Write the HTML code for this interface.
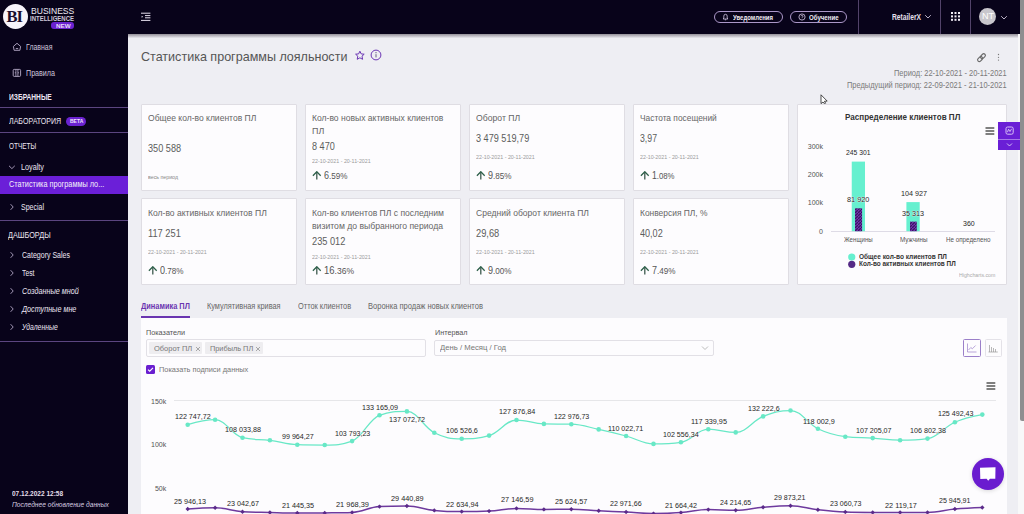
<!DOCTYPE html><html><head><meta charset="utf-8"><style>
html,body{margin:0;padding:0;width:1024px;height:514px;overflow:hidden;background:#eeeef3}
body{position:relative;font-family:"Liberation Sans",sans-serif}
.t{position:absolute;white-space:nowrap;line-height:1;transform-origin:0 0}
</style></head><body>
<!-- sidebar -->
<div style="position:absolute;left:0;top:0;width:128px;height:514px;background:#08031a"></div>
<div style="position:absolute;left:128px;top:0;width:892px;height:34px;background:#08031a"></div>
<!-- header shadow -->
<div style="position:absolute;left:128px;top:34px;width:892px;height:4px;background:linear-gradient(#938f98,#e9e8ee)"></div>
<!-- main bg -->
<div style="position:absolute;left:128px;top:38px;width:892px;height:476px;background:#eeeef3"></div>
<!-- scrollbar -->
<div style="position:absolute;left:1018.2px;top:34px;width:6px;height:480px;background:#f8f8f9"></div>
<div style="position:absolute;left:1019.8px;top:-4px;width:4.2px;height:424.5px;background:#8e8e90;border-radius:2.1px 0 0 2.1px"></div>

<!-- logo -->
<div style="position:absolute;left:2.7px;top:4.3px;width:25px;height:25px;border-radius:50%;background:#f7f4fa"></div>
<div style="position:absolute;left:6.4px;top:8.5px;font:bold 16.5px 'Liberation Serif',serif;color:#1a0f2e;line-height:1;letter-spacing:-1px">BI</div>
<div style="position:absolute;left:51px;top:22.3px;width:23px;height:6.3px;border-radius:3px;background:#6a22d0"></div>
<div style="position:absolute;left:56px;top:22.6px;font:bold 6px 'Liberation Sans',sans-serif;color:#e9def8;line-height:1;transform:scaleX(1.05);transform-origin:left">NEW</div>

<!-- sidebar icons -->
<svg style="position:absolute;left:12px;top:42px" width="10" height="10" viewBox="0 0 10 10"><path d="M1.4 4.4 L5 1.3 L8.6 4.4 L7.9 8.3 H2.1 Z M3.8 6.6 H6.2" fill="none" stroke="#b9aecb" stroke-width="0.9" stroke-linejoin="round"/></svg>
<svg style="position:absolute;left:12px;top:68px" width="10" height="10" viewBox="0 0 10 10"><rect x="1.2" y="1.4" width="7.4" height="7" rx="1" fill="none" stroke="#b9aecb" stroke-width="0.9"/><path d="M3.9 2 V8 M5.9 2 V8 M3.9 4.8 H2.8 M5.9 4.8 H7" stroke="#b9aecb" stroke-width="0.8"/></svg>
<div style="position:absolute;left:0;top:107.1px;width:128px;height:1px;background:#5b4580"></div>
<div style="position:absolute;left:65.6px;top:116.9px;width:20.4px;height:8.7px;border-radius:4.4px;background:#6a22d0"></div>
<div style="position:absolute;left:70px;top:118.6px;font:bold 5px 'Liberation Sans',sans-serif;color:#efe6fa;line-height:1">BETA</div>
<div style="position:absolute;left:0;top:132.1px;width:128px;height:1px;background:#5b4580"></div>
<svg style="position:absolute;left:8px;top:163px" width="8" height="8" viewBox="0 0 8 8"><path d="M1 2.8 L3.9 5.6 L6.8 2.8" fill="none" stroke="#b3a7c6" stroke-width="0.9"/></svg>
<div style="position:absolute;left:0;top:176px;width:128px;height:18px;background:#6b1fd8"></div>
<svg style="position:absolute;left:8px;top:203px" width="8" height="8" viewBox="0 0 8 8"><path d="M2.6 1.2 L5.2 4 L2.6 6.8" fill="none" stroke="#b3a7c6" stroke-width="0.9"/></svg>
<div style="position:absolute;left:0;top:219.9px;width:128px;height:1px;background:#5b4580"></div>
<svg style="position:absolute;left:8px;top:251px" width="8" height="8" viewBox="0 0 8 8"><path d="M2.6 1.2 L5.2 4 L2.6 6.8" fill="none" stroke="#b3a7c6" stroke-width="0.9"/></svg>
<svg style="position:absolute;left:8px;top:269px" width="8" height="8" viewBox="0 0 8 8"><path d="M2.6 1.2 L5.2 4 L2.6 6.8" fill="none" stroke="#b3a7c6" stroke-width="0.9"/></svg>
<svg style="position:absolute;left:8px;top:287px" width="8" height="8" viewBox="0 0 8 8"><path d="M2.6 1.2 L5.2 4 L2.6 6.8" fill="none" stroke="#b3a7c6" stroke-width="0.9"/></svg>
<svg style="position:absolute;left:8px;top:305px" width="8" height="8" viewBox="0 0 8 8"><path d="M2.6 1.2 L5.2 4 L2.6 6.8" fill="none" stroke="#b3a7c6" stroke-width="0.9"/></svg>
<svg style="position:absolute;left:8px;top:323px" width="8" height="8" viewBox="0 0 8 8"><path d="M2.6 1.2 L5.2 4 L2.6 6.8" fill="none" stroke="#b3a7c6" stroke-width="0.9"/></svg>
<div style="position:absolute;left:0;top:340.5px;width:128px;height:1px;background:#5b4580"></div>

<!-- header items -->
<svg style="position:absolute;left:140px;top:12px" width="12" height="11" viewBox="0 0 12 11"><path d="M1 1.2 H10.4 M5 3.6 H10.4 M5 5.8 H10.4 M1 8.4 H10.4" stroke="#e6e0ee" stroke-width="1"/><path d="M1.6 3.8 L3.2 4.8 L1.6 5.8 Z" fill="#e6e0ee"/></svg>
<div style="position:absolute;left:714px;top:11px;width:66.6px;height:9.8px;border:1px solid #ab97c8;border-radius:6px"></div>
<svg style="position:absolute;left:722px;top:13px" width="7" height="8" viewBox="0 0 7 8"><path d="M1.2 6 H5.8 L5.2 5 V3.2 A1.7 1.9 0 0 0 1.8 3.2 V5 Z M2.8 6.8 H4.2" fill="none" stroke="#d6cae6" stroke-width="0.8"/></svg>
<div style="position:absolute;left:789.7px;top:11px;width:55.5px;height:9.8px;border:1px solid #ab97c8;border-radius:6px"></div>
<svg style="position:absolute;left:797.5px;top:13.2px" width="8" height="8" viewBox="0 0 8 8"><circle cx="4" cy="4" r="3.1" fill="none" stroke="#d6cae6" stroke-width="0.8"/><path d="M3 3.2 A1 1 0 1 1 4 4.3 V4.8 M4 5.8 V6.2" fill="none" stroke="#d6cae6" stroke-width="0.7"/></svg>
<div style="position:absolute;left:858px;top:0;width:1px;height:34px;background:#52436a"></div>
<div style="position:absolute;left:939.6px;top:0;width:1px;height:34px;background:#52436a"></div>
<div style="position:absolute;left:970px;top:0;width:1px;height:34px;background:#52436a"></div>
<svg style="position:absolute;left:923.8px;top:13px" width="8" height="7" viewBox="0 0 8 7"><path d="M1.2 2.2 L4 5 L6.8 2.2" fill="none" stroke="#cfc6da" stroke-width="0.9"/></svg>
<svg style="position:absolute;left:951px;top:12.3px" width="9" height="9" viewBox="0 0 9 9" fill="#f2eef6"><rect x="0" y="0" width="2" height="2"/><rect x="3.5" y="0" width="2" height="2"/><rect x="7" y="0" width="2" height="2"/><rect x="0" y="3.4" width="2" height="2"/><rect x="3.5" y="3.4" width="2" height="2"/><rect x="7" y="3.4" width="2" height="2"/><rect x="0" y="6.8" width="2" height="2"/><rect x="3.5" y="6.8" width="2" height="2"/><rect x="7" y="6.8" width="2" height="2"/></svg>
<div style="position:absolute;left:978.8px;top:7.9px;width:17.6px;height:17.6px;border-radius:50%;background:#c8c6cc"></div>
<svg style="position:absolute;left:1000px;top:13.5px" width="8" height="7" viewBox="0 0 8 7"><path d="M1.2 2.2 L4 5 L6.8 2.2" fill="none" stroke="#cfc6da" stroke-width="0.9"/></svg>

<!-- title icons -->
<svg style="position:absolute;left:354px;top:50px" width="12" height="11" viewBox="0 0 12 11"><path d="M5.9 1.2 L7.2 3.9 L10.2 4.2 L8 6.2 L8.6 9.3 L5.9 7.8 L3.2 9.3 L3.8 6.2 L1.6 4.2 L4.6 3.9 Z" fill="none" stroke="#6b35b4" stroke-width="1" stroke-linejoin="round"/></svg>
<svg style="position:absolute;left:369.7px;top:49.3px" width="12" height="12" viewBox="0 0 12 12"><circle cx="6" cy="6" r="4.9" fill="none" stroke="#6b35b4" stroke-width="1"/><path d="M6 5.2 V8.4" stroke="#5a4a78" stroke-width="0.9"/><circle cx="6" cy="3.7" r="0.6" fill="#5a4a78"/></svg>
<svg style="position:absolute;left:975px;top:51px" width="13" height="13" viewBox="0 0 13 13"><g transform="rotate(-45 6.5 6.5)" fill="none" stroke="#6a6a6a" stroke-width="1.15"><rect x="1.6" y="4.9" width="5.6" height="3.4" rx="1.7"/><rect x="5.6" y="4.9" width="5.6" height="3.4" rx="1.7"/></g></svg>
<svg style="position:absolute;left:997px;top:53px" width="3" height="9" viewBox="0 0 3 9" fill="#777"><circle cx="1.5" cy="1.5" r="0.65"/><circle cx="1.5" cy="4.3" r="0.65"/><circle cx="1.5" cy="7.1" r="0.65"/></svg>
<!-- cursor -->
<svg style="position:absolute;left:820px;top:93.5px" width="9" height="11" viewBox="0 0 9 11"><path d="M1 0.8 V9.6 L3 8 L4.5 9.8 L5.6 9.2 L4.4 7.3 L7.2 7.1 Z" fill="#fff" stroke="#222" stroke-width="0.8" stroke-linejoin="round"/></svg>

<div style="position:absolute;left:141px;top:103.5px;width:154.00px;height:85.00px;background:#fdfcfe;border:1px solid #dfdde3;border-radius:1px;"></div>
<div style="position:absolute;left:141px;top:198.1px;width:154.00px;height:84.90px;background:#fdfcfe;border:1px solid #dfdde3;border-radius:1px;"></div>
<div style="position:absolute;left:305px;top:103.5px;width:154.00px;height:85.00px;background:#fdfcfe;border:1px solid #dfdde3;border-radius:1px;"></div>
<div style="position:absolute;left:305px;top:198.1px;width:154.00px;height:84.90px;background:#fdfcfe;border:1px solid #dfdde3;border-radius:1px;"></div>
<div style="position:absolute;left:469px;top:103.5px;width:154.00px;height:85.00px;background:#fdfcfe;border:1px solid #dfdde3;border-radius:1px;"></div>
<div style="position:absolute;left:469px;top:198.1px;width:154.00px;height:84.90px;background:#fdfcfe;border:1px solid #dfdde3;border-radius:1px;"></div>
<div style="position:absolute;left:633px;top:103.5px;width:154.00px;height:85.00px;background:#fdfcfe;border:1px solid #dfdde3;border-radius:1px;"></div>
<div style="position:absolute;left:633px;top:198.1px;width:154.00px;height:84.90px;background:#fdfcfe;border:1px solid #dfdde3;border-radius:1px;"></div>
<div style="position:absolute;left:797px;top:103.5px;width:208.00px;height:179.00px;background:#fdfcfe;border:1px solid #dfdde3;border-radius:1px;"></div>
<svg style="position:absolute;left:312.1px;top:170.8px" width="10" height="9" viewBox="0 0 10 9"><path d="M4.8 8.6 V1.2" fill="none" stroke="#3d5a4e" stroke-width="1.3"/><path d="M0.9 4.7 L4.8 0.7 L8.7 4.7" fill="none" stroke="#2c5e48" stroke-width="1.25"/></svg>
<svg style="position:absolute;left:476.1px;top:170.8px" width="10" height="9" viewBox="0 0 10 9"><path d="M4.8 8.6 V1.2" fill="none" stroke="#3d5a4e" stroke-width="1.3"/><path d="M0.9 4.7 L4.8 0.7 L8.7 4.7" fill="none" stroke="#2c5e48" stroke-width="1.25"/></svg>
<svg style="position:absolute;left:640.1px;top:170.8px" width="10" height="9" viewBox="0 0 10 9"><path d="M4.8 8.6 V1.2" fill="none" stroke="#3d5a4e" stroke-width="1.3"/><path d="M0.9 4.7 L4.8 0.7 L8.7 4.7" fill="none" stroke="#2c5e48" stroke-width="1.25"/></svg>
<svg style="position:absolute;left:148.1px;top:265.8px" width="10" height="9" viewBox="0 0 10 9"><path d="M4.8 8.6 V1.2" fill="none" stroke="#3d5a4e" stroke-width="1.3"/><path d="M0.9 4.7 L4.8 0.7 L8.7 4.7" fill="none" stroke="#2c5e48" stroke-width="1.25"/></svg>
<svg style="position:absolute;left:312.1px;top:265.8px" width="10" height="9" viewBox="0 0 10 9"><path d="M4.8 8.6 V1.2" fill="none" stroke="#3d5a4e" stroke-width="1.3"/><path d="M0.9 4.7 L4.8 0.7 L8.7 4.7" fill="none" stroke="#2c5e48" stroke-width="1.25"/></svg>
<svg style="position:absolute;left:476.1px;top:265.8px" width="10" height="9" viewBox="0 0 10 9"><path d="M4.8 8.6 V1.2" fill="none" stroke="#3d5a4e" stroke-width="1.3"/><path d="M0.9 4.7 L4.8 0.7 L8.7 4.7" fill="none" stroke="#2c5e48" stroke-width="1.25"/></svg>
<svg style="position:absolute;left:640.1px;top:265.8px" width="10" height="9" viewBox="0 0 10 9"><path d="M4.8 8.6 V1.2" fill="none" stroke="#3d5a4e" stroke-width="1.3"/><path d="M0.9 4.7 L4.8 0.7 L8.7 4.7" fill="none" stroke="#2c5e48" stroke-width="1.25"/></svg>
<svg style="position:absolute;left:985px;top:126.5px" width="10" height="8" viewBox="0 0 10 8"><path d="M0.5 1 H9.3 M0.5 4 H9.3 M0.5 7 H9.3" stroke="#555" stroke-width="1.3"/></svg>
<div style="position:absolute;left:831px;top:230.7px;width:164.3px;height:1px;background:#dedbe6"></div>
<svg style="position:absolute;left:0;top:0" width="1024" height="514"><defs><pattern id="pp" width="3" height="3" patternUnits="userSpaceOnUse"><rect width="3" height="3" fill="#7434b0"/><path d="M0 3 L3 0" stroke="#3a1562" stroke-width="1.3"/></pattern></defs><rect x="851.75" y="161.6" width="13.25" height="69.6" fill="#66f0cf"/><rect x="855" y="208.3" width="7.1" height="22.9" fill="url(#pp)"/><rect x="906.4" y="202.1" width="13.3" height="29.1" fill="#66f0cf"/><rect x="910" y="221.6" width="6.8" height="9.6" fill="url(#pp)"/><circle cx="851.75" cy="257" r="3.6" fill="#66f0cf"/><circle cx="851.75" cy="264.3" r="3.6" fill="#552a86"/></svg>
<div style="position:absolute;left:998px;top:122.3px;width:22px;height:27.7px;background:#6a1fd6"></div>
<div style="position:absolute;left:998px;top:139.4px;width:22px;height:0.8px;background:#a679e8"></div>
<svg style="position:absolute;left:1004.5px;top:126.4px" width="9" height="9" viewBox="0 0 9 9"><rect x="1" y="1" width="7.2" height="7.2" rx="1.6" fill="none" stroke="#d9c2f6" stroke-width="1"/><path d="M2.4 6.2 L3.6 3.2 L5 5.6 L6.6 2.8" fill="none" stroke="#d9c2f6" stroke-width="0.9"/></svg>
<svg style="position:absolute;left:1005.5px;top:142px" width="7" height="6" viewBox="0 0 7 6"><path d="M1 1.5 L3.5 4 L6 1.5" fill="none" stroke="#eadffa" stroke-width="0.8"/></svg>
<div style="position:absolute;left:141px;top:316.4px;width:49px;height:1.6px;background:#6a35b0"></div>
<div style="position:absolute;left:141px;top:318px;width:866.00px;height:196.00px;background:#fdfcfe;border-radius:0px;"></div>
<div style="position:absolute;left:146px;top:339px;width:277.50px;height:15.60px;background:#fdfcfe;border:1px solid #e2e0e6;border-radius:2px;"></div>
<div style="position:absolute;left:149px;top:342px;width:53.00px;height:12.00px;background:#eeedf0;border-radius:1px;"></div>
<div style="position:absolute;left:204.5px;top:342px;width:58.30px;height:12.00px;background:#eeedf0;border-radius:1px;"></div>
<svg style="position:absolute;left:194.5px;top:345.5px" width="6" height="6" viewBox="0 0 6 6"><path d="M1 1 L5 5 M5 1 L1 5" stroke="#888" stroke-width="0.7"/></svg>
<svg style="position:absolute;left:254.8px;top:345.5px" width="6" height="6" viewBox="0 0 6 6"><path d="M1 1 L5 5 M5 1 L1 5" stroke="#888" stroke-width="0.7"/></svg>
<div style="position:absolute;left:434.4px;top:339.5px;width:277.80px;height:14.90px;background:#fdfcfe;border:1px solid #e2e0e6;border-radius:2px;"></div>
<svg style="position:absolute;left:700.5px;top:345px" width="8" height="6" viewBox="0 0 8 6"><path d="M1 1.5 L4 4.5 L7 1.5" fill="none" stroke="#aaa" stroke-width="0.8"/></svg>
<div style="position:absolute;left:146px;top:365px;width:8.60px;height:8.70px;background:#6a1fd0;border-radius:1.5px;"></div>
<svg style="position:absolute;left:146px;top:365px" width="9" height="9" viewBox="0 0 9 9"><path d="M2 4.6 L3.7 6.2 L7 2.9" fill="none" stroke="#fff" stroke-width="1.1"/></svg>
<div style="position:absolute;left:962.8px;top:339px;width:15.80px;height:15.70px;background:#fdfcfe;border:1px solid #9b7fc9;border-radius:1.5px;"></div>
<div style="position:absolute;left:984.6px;top:339px;width:15.40px;height:15.70px;background:#fdfcfe;border:1px solid #e4e2e8;border-radius:1.5px;"></div>
<svg style="position:absolute;left:966px;top:342px" width="12" height="12" viewBox="0 0 12 12"><path d="M1.5 1.5 V10 H10.5" fill="none" stroke="#9b7fc9" stroke-width="0.7"/><path d="M2.5 8 L4.8 5.5 L6.3 6.8 L9.6 3.5" fill="none" stroke="#9b7fc9" stroke-width="0.7"/></svg>
<svg style="position:absolute;left:987px;top:342px" width="12" height="12" viewBox="0 0 12 12"><path d="M1.5 10 H10.8 M2.5 10 V3 M4.5 10 V5 M6.5 10 V6 M8.5 10 V7" fill="none" stroke="#999" stroke-width="0.7"/></svg>
<svg style="position:absolute;left:985.5px;top:382px" width="10" height="8" viewBox="0 0 10 8"><path d="M0.5 1 H9.3 M0.5 4 H9.3 M0.5 7 H9.3" stroke="#555" stroke-width="1.3"/></svg>
<div style="position:absolute;left:174.4px;top:400px;width:821.8px;height:1px;background:#e6e6e9"></div>
<svg style="position:absolute;left:0;top:0" width="1024" height="514"><path d="M187.70 424.70 C187.70 424.70 204.14 419.70 215.10 419.70 C226.06 419.70 231.54 435.10 242.50 437.70 C253.46 440.30 258.94 438.90 269.90 440.30 C280.86 441.70 286.34 444.40 297.30 444.70 C308.26 445.00 313.74 445.00 324.70 445.00 C335.66 445.00 341.14 445.00 352.10 441.10 C363.06 437.20 368.54 419.20 379.50 415.30 C390.46 411.40 395.94 411.40 406.90 411.40 C417.86 411.40 423.34 427.23 434.30 432.70 C445.26 438.17 450.74 438.75 461.70 438.75 C472.66 438.75 478.14 438.75 489.10 435.60 C500.06 432.45 505.54 420.00 516.50 420.00 C527.46 420.00 532.94 423.60 543.90 423.90 C554.86 424.20 560.34 423.90 571.30 424.20 C582.26 424.50 587.74 427.04 598.70 429.40 C609.66 431.76 615.14 433.10 626.10 436.00 C637.06 438.90 642.54 443.90 653.50 443.90 C664.46 443.90 669.94 443.90 680.90 442.30 C691.86 440.70 697.34 429.20 708.30 429.20 C719.26 429.20 724.74 432.40 735.70 432.40 C746.66 432.40 752.14 420.78 763.10 416.40 C774.06 412.02 779.54 410.50 790.50 410.50 C801.46 410.50 806.94 423.46 817.90 428.70 C828.86 433.94 834.34 435.30 845.30 436.70 C856.26 438.10 861.74 437.40 872.70 438.10 C883.66 438.80 889.14 440.20 900.10 440.20 C911.06 440.20 916.54 440.20 927.50 438.60 C938.46 437.00 943.94 427.00 954.90 422.20 C965.86 417.40 982.30 414.60 982.30 414.60" fill="none" stroke="#68e8c6" stroke-width="1.25"/><circle cx="187.70" cy="424.7" r="2.3" fill="#68e8c6"/><circle cx="215.10" cy="419.7" r="2.3" fill="#68e8c6"/><circle cx="242.50" cy="437.7" r="2.3" fill="#68e8c6"/><circle cx="269.90" cy="440.3" r="2.3" fill="#68e8c6"/><circle cx="297.30" cy="444.7" r="2.3" fill="#68e8c6"/><circle cx="324.70" cy="445.0" r="2.3" fill="#68e8c6"/><circle cx="352.10" cy="441.1" r="2.3" fill="#68e8c6"/><circle cx="379.50" cy="415.3" r="2.3" fill="#68e8c6"/><circle cx="406.90" cy="411.4" r="2.3" fill="#68e8c6"/><circle cx="434.30" cy="432.7" r="2.3" fill="#68e8c6"/><circle cx="461.70" cy="438.75" r="2.3" fill="#68e8c6"/><circle cx="489.10" cy="435.6" r="2.3" fill="#68e8c6"/><circle cx="516.50" cy="420.0" r="2.3" fill="#68e8c6"/><circle cx="543.90" cy="423.9" r="2.3" fill="#68e8c6"/><circle cx="571.30" cy="424.2" r="2.3" fill="#68e8c6"/><circle cx="598.70" cy="429.4" r="2.3" fill="#68e8c6"/><circle cx="626.10" cy="436.0" r="2.3" fill="#68e8c6"/><circle cx="653.50" cy="443.9" r="2.3" fill="#68e8c6"/><circle cx="680.90" cy="442.3" r="2.3" fill="#68e8c6"/><circle cx="708.30" cy="429.2" r="2.3" fill="#68e8c6"/><circle cx="735.70" cy="432.4" r="2.3" fill="#68e8c6"/><circle cx="763.10" cy="416.4" r="2.3" fill="#68e8c6"/><circle cx="790.50" cy="410.5" r="2.3" fill="#68e8c6"/><circle cx="817.90" cy="428.7" r="2.3" fill="#68e8c6"/><circle cx="845.30" cy="436.7" r="2.3" fill="#68e8c6"/><circle cx="872.70" cy="438.1" r="2.3" fill="#68e8c6"/><circle cx="900.10" cy="440.2" r="2.3" fill="#68e8c6"/><circle cx="927.50" cy="438.6" r="2.3" fill="#68e8c6"/><circle cx="954.90" cy="422.2" r="2.3" fill="#68e8c6"/><circle cx="982.30" cy="414.6" r="2.3" fill="#68e8c6"/><path d="M187.70 509.00 C187.70 509.00 204.14 507.80 215.10 507.80 C226.06 507.80 231.54 510.90 242.50 511.70 C253.46 512.50 258.94 512.24 269.90 512.50 C280.86 512.76 286.34 513.00 297.30 513.00 C308.26 513.00 313.74 513.00 324.70 512.90 C335.66 512.80 341.14 512.90 352.10 512.40 C363.06 511.90 368.54 507.20 379.50 506.60 C390.46 506.00 395.94 506.00 406.90 506.00 C417.86 506.00 423.34 509.28 434.30 510.40 C445.26 511.52 450.74 511.60 461.70 511.60 C472.66 511.60 478.14 511.60 489.10 511.10 C500.06 510.60 505.54 508.40 516.50 508.40 C527.46 508.40 532.94 509.40 543.90 509.40 C554.86 509.40 560.34 509.20 571.30 509.20 C582.26 509.20 587.74 510.24 598.70 510.80 C609.66 511.36 615.14 511.44 626.10 512.00 C637.06 512.56 642.54 513.60 653.50 513.60 C664.46 513.60 669.94 513.40 680.90 512.60 C691.86 511.80 697.34 509.60 708.30 509.60 C719.26 509.60 724.74 510.30 735.70 510.30 C746.66 510.30 752.14 508.12 763.10 507.20 C774.06 506.28 779.54 505.70 790.50 505.70 C801.46 505.70 806.94 508.44 817.90 509.70 C828.86 510.96 834.34 511.60 845.30 512.00 C856.26 512.40 861.74 512.40 872.70 512.40 C883.66 512.40 889.14 512.40 900.10 512.40 C911.06 512.40 916.54 512.40 927.50 512.40 C938.46 512.40 943.94 509.98 954.90 509.00 C965.86 508.02 982.30 507.50 982.30 507.50" fill="none" stroke="#6e3a9e" stroke-width="1.5"/><path d="M187.70 506.8 L189.90 509.0 L187.70 511.2 L185.50 509.0 Z" fill="#5b2a8a"/><path d="M215.10 505.6 L217.30 507.8 L215.10 510.0 L212.90 507.8 Z" fill="#5b2a8a"/><path d="M242.50 509.5 L244.70 511.7 L242.50 513.9 L240.30 511.7 Z" fill="#5b2a8a"/><path d="M269.90 510.3 L272.10 512.5 L269.90 514.7 L267.70 512.5 Z" fill="#5b2a8a"/><path d="M297.30 510.8 L299.50 513.0 L297.30 515.2 L295.10 513.0 Z" fill="#5b2a8a"/><path d="M324.70 510.7 L326.90 512.9 L324.70 515.1 L322.50 512.9 Z" fill="#5b2a8a"/><path d="M352.10 510.2 L354.30 512.4 L352.10 514.6 L349.90 512.4 Z" fill="#5b2a8a"/><path d="M379.50 504.40000000000003 L381.70 506.6 L379.50 508.8 L377.30 506.6 Z" fill="#5b2a8a"/><path d="M406.90 503.8 L409.10 506.0 L406.90 508.2 L404.70 506.0 Z" fill="#5b2a8a"/><path d="M434.30 508.2 L436.50 510.4 L434.30 512.6 L432.10 510.4 Z" fill="#5b2a8a"/><path d="M461.70 509.40000000000003 L463.90 511.6 L461.70 513.8000000000001 L459.50 511.6 Z" fill="#5b2a8a"/><path d="M489.10 508.90000000000003 L491.30 511.1 L489.10 513.3000000000001 L486.90 511.1 Z" fill="#5b2a8a"/><path d="M516.50 506.2 L518.70 508.4 L516.50 510.59999999999997 L514.30 508.4 Z" fill="#5b2a8a"/><path d="M543.90 507.2 L546.10 509.4 L543.90 511.59999999999997 L541.70 509.4 Z" fill="#5b2a8a"/><path d="M571.30 507.0 L573.50 509.2 L571.30 511.4 L569.10 509.2 Z" fill="#5b2a8a"/><path d="M598.70 508.6 L600.90 510.8 L598.70 513.0 L596.50 510.8 Z" fill="#5b2a8a"/><path d="M626.10 509.8 L628.30 512.0 L626.10 514.2 L623.90 512.0 Z" fill="#5b2a8a"/><path d="M653.50 511.40000000000003 L655.70 513.6 L653.50 515.8000000000001 L651.30 513.6 Z" fill="#5b2a8a"/><path d="M680.90 510.40000000000003 L683.10 512.6 L680.90 514.8000000000001 L678.70 512.6 Z" fill="#5b2a8a"/><path d="M708.30 507.40000000000003 L710.50 509.6 L708.30 511.8 L706.10 509.6 Z" fill="#5b2a8a"/><path d="M735.70 508.1 L737.90 510.3 L735.70 512.5 L733.50 510.3 Z" fill="#5b2a8a"/><path d="M763.10 505.0 L765.30 507.2 L763.10 509.4 L760.90 507.2 Z" fill="#5b2a8a"/><path d="M790.50 503.5 L792.70 505.7 L790.50 507.9 L788.30 505.7 Z" fill="#5b2a8a"/><path d="M817.90 507.5 L820.10 509.7 L817.90 511.9 L815.70 509.7 Z" fill="#5b2a8a"/><path d="M845.30 509.8 L847.50 512.0 L845.30 514.2 L843.10 512.0 Z" fill="#5b2a8a"/><path d="M872.70 510.2 L874.90 512.4 L872.70 514.6 L870.50 512.4 Z" fill="#5b2a8a"/><path d="M900.10 510.2 L902.30 512.4 L900.10 514.6 L897.90 512.4 Z" fill="#5b2a8a"/><path d="M927.50 510.2 L929.70 512.4 L927.50 514.6 L925.30 512.4 Z" fill="#5b2a8a"/><path d="M954.90 506.8 L957.10 509.0 L954.90 511.2 L952.70 509.0 Z" fill="#5b2a8a"/><path d="M982.30 505.3 L984.50 507.5 L982.30 509.7 L980.10 507.5 Z" fill="#5b2a8a"/></svg>
<div style="position:absolute;left:972px;top:458px;width:32px;height:32px;border-radius:50%;background:#6a1ccf;box-shadow:0 1px 4px rgba(0,0,0,0.15)"></div>
<svg style="position:absolute;left:978px;top:465px" width="20" height="18" viewBox="0 0 20 18"><path d="M2 2.8 L17.5 2.2 L17.3 13.8 L12 13.8 L10.2 15.8 L8.6 13.8 L2.3 14 Z" fill="#fff"/></svg>
<div class="t" id="t0" style="left:30.50px;top:7.31px;font-size:9.2px;color:#efeaf4;transform:scaleX(0.9318);">BUSINESS</div>
<div class="t" id="t1" style="left:30.20px;top:15.71px;font-size:6.6px;color:#cfc8d8;font-weight:700;transform:scaleX(0.9099);">INTELLIGENCE</div>
<div class="t" id="t2" style="left:26.00px;top:42.96px;font-size:8.91px;color:#cfc6da;transform:scaleX(0.7816);">Главная</div>
<div class="t" id="t3" style="left:26.00px;top:68.76px;font-size:8.91px;color:#cfc6da;transform:scaleX(0.8017);">Правила</div>
<div class="t" id="t4" style="left:8.75px;top:92.96px;font-size:8.91px;color:#ece6f2;font-weight:700;transform:scaleX(0.7443);">ИЗБРАННЫЕ</div>
<div class="t" id="t5" style="left:8.75px;top:118.02px;font-size:8.25px;color:#ece6f2;transform:scaleX(0.8564);">ЛАБОРАТОРИЯ</div>
<div class="t" id="t6" style="left:8.75px;top:143.12px;font-size:8.25px;color:#ece6f2;transform:scaleX(0.7842);">ОТЧЕТЫ</div>
<div class="t" id="t7" style="left:21.40px;top:162.76px;font-size:8.91px;color:#ece6f2;transform:scaleX(0.8146);">Loyalty</div>
<div class="t" id="t8" style="left:8.75px;top:180.36px;font-size:8.91px;color:#f4effa;transform:scaleX(0.8220);">Статистика программы ло...</div>
<div class="t" id="t9" style="left:21.40px;top:203.06px;font-size:8.91px;color:#ece6f2;transform:scaleX(0.7872);">Special</div>
<div class="t" id="t10" style="left:8.40px;top:231.52px;font-size:8.25px;color:#ece6f2;transform:scaleX(0.8832);">ДАШБОРДЫ</div>
<div class="t" id="t11" style="left:21.50px;top:250.76px;font-size:8.91px;color:#ece6f2;transform:scaleX(0.7881);">Category Sales</div>
<div class="t" id="t12" style="left:21.50px;top:268.56px;font-size:8.91px;color:#ece6f2;transform:scaleX(0.7587);">Test</div>
<div class="t" id="t13" style="left:21.50px;top:286.56px;font-size:8.91px;color:#ece6f2;font-style:italic;transform:scaleX(0.8125);">Созданные мной</div>
<div class="t" id="t14" style="left:21.50px;top:304.76px;font-size:8.91px;color:#ece6f2;font-style:italic;transform:scaleX(0.8106);">Доступные мне</div>
<div class="t" id="t15" style="left:21.50px;top:322.76px;font-size:8.91px;color:#ece6f2;font-style:italic;transform:scaleX(0.7652);">Удаленные</div>
<div class="t" id="t16" style="left:11.90px;top:490.38px;font-size:7.7px;color:#e4deea;font-weight:700;transform:scaleX(0.8477);">07.12.2022 12:58</div>
<div class="t" id="t17" style="left:11.90px;top:500.58px;font-size:7.7px;color:#d6cce0;font-style:italic;transform:scaleX(0.8631);">Последнее обновление данных</div>
<div class="t" id="t18" style="left:733.00px;top:13.78px;font-size:7.7px;color:#f0ecf4;font-weight:700;transform:scaleX(0.7772);">Уведомления</div>
<div class="t" id="t19" style="left:809.00px;top:13.78px;font-size:7.7px;color:#f0ecf4;font-weight:700;transform:scaleX(0.7936);">Обучение</div>
<div class="t" id="t20" style="left:892.00px;top:12.76px;font-size:8.91px;color:#e6e0ee;font-weight:700;transform:scaleX(0.7508);">RetailerX</div>
<div class="t" id="t21" style="left:981.50px;top:12.92px;font-size:8.25px;color:#ffffff;transform:scaleX(1.0909);">NT</div>
<div class="t" id="t22" style="left:140.60px;top:51.40px;font-size:12.4px;color:#555;transform:scaleX(1.0123);">Статистика программы лояльности</div>
<div class="t" id="t23" style="left:894.00px;top:68.68px;font-size:9.24px;color:#7a7a7a;transform:scaleX(0.8071);">Период: 22-10-2021 - 20-11-2021</div>
<div class="t" id="t24" style="left:847.00px;top:80.98px;font-size:9.24px;color:#7a7a7a;transform:scaleX(0.8070);">Предыдущий период: 22-09-2021 - 21-10-2021</div>
<div class="t" id="t25" style="left:148.00px;top:113.76px;font-size:8.91px;color:#666;transform:scaleX(0.9580);">Общее кол-во клиентов ПЛ</div>
<div class="t" id="t26" style="left:148.00px;top:143.17px;font-size:10.78px;color:#5c5c5c;transform:scaleX(0.8504);">350 588</div>
<div class="t" id="t27" style="left:148.00px;top:175.17px;font-size:5.94px;color:#888;transform:scaleX(0.8856);">весь период</div>
<div class="t" id="t28" style="left:312.00px;top:113.76px;font-size:8.91px;color:#666;transform:scaleX(0.9605);">Кол-во новых активных клиентов</div>
<div class="t" id="t29" style="left:312.00px;top:126.86px;font-size:8.91px;color:#666;">ПЛ</div>
<div class="t" id="t30" style="left:312.00px;top:140.87px;font-size:10.78px;color:#5c5c5c;transform:scaleX(0.8459);">8 470</div>
<div class="t" id="t31" style="left:312.00px;top:158.84px;font-size:5.5px;color:#9a9a9a;transform:scaleX(0.9663);">22-10-2021 - 20-11-2021</div>
<div class="t" id="t32" style="left:476.00px;top:113.76px;font-size:8.91px;color:#666;transform:scaleX(0.9714);">Оборот ПЛ</div>
<div class="t" id="t33" style="left:476.00px;top:133.17px;font-size:10.78px;color:#5c5c5c;transform:scaleX(0.8463);">3 479 519,79</div>
<div class="t" id="t34" style="left:476.00px;top:154.64px;font-size:5.5px;color:#9a9a9a;transform:scaleX(0.9663);">22-10-2021 - 20-11-2021</div>
<div class="t" id="t35" style="left:640.00px;top:113.76px;font-size:8.91px;color:#666;transform:scaleX(0.9398);">Частота посещений</div>
<div class="t" id="t36" style="left:640.00px;top:133.17px;font-size:10.78px;color:#5c5c5c;transform:scaleX(0.8113);">3,97</div>
<div class="t" id="t37" style="left:640.00px;top:154.64px;font-size:5.5px;color:#9a9a9a;transform:scaleX(0.9663);">22-10-2021 - 20-11-2021</div>
<div class="t" id="t38" style="left:148.00px;top:208.76px;font-size:8.91px;color:#666;transform:scaleX(0.9613);">Кол-во активных клиентов ПЛ</div>
<div class="t" id="t39" style="left:148.00px;top:228.17px;font-size:10.78px;color:#5c5c5c;transform:scaleX(0.8603);">117 251</div>
<div class="t" id="t40" style="left:148.00px;top:249.64px;font-size:5.5px;color:#9a9a9a;transform:scaleX(0.9663);">22-10-2021 - 20-11-2021</div>
<div class="t" id="t41" style="left:312.00px;top:208.76px;font-size:8.91px;color:#666;transform:scaleX(0.9608);">Кол-во клиентов ПЛ с последним</div>
<div class="t" id="t42" style="left:312.00px;top:221.86px;font-size:8.91px;color:#666;transform:scaleX(0.9707);">визитом до выбранного периода</div>
<div class="t" id="t43" style="left:312.00px;top:236.37px;font-size:10.78px;color:#5c5c5c;transform:scaleX(0.8581);">235 012</div>
<div class="t" id="t44" style="left:312.00px;top:254.54px;font-size:5.5px;color:#9a9a9a;transform:scaleX(0.9663);">22-10-2021 - 20-11-2021</div>
<div class="t" id="t45" style="left:476.00px;top:208.76px;font-size:8.91px;color:#666;transform:scaleX(0.9604);">Средний оборот клиента ПЛ</div>
<div class="t" id="t46" style="left:476.00px;top:228.17px;font-size:10.78px;color:#5c5c5c;transform:scaleX(0.8645);">29,68</div>
<div class="t" id="t47" style="left:476.00px;top:249.64px;font-size:5.5px;color:#9a9a9a;transform:scaleX(0.9663);">22-10-2021 - 20-11-2021</div>
<div class="t" id="t48" style="left:640.00px;top:208.76px;font-size:8.91px;color:#666;transform:scaleX(0.9449);">Конверсия ПЛ, %</div>
<div class="t" id="t49" style="left:640.00px;top:228.17px;font-size:10.78px;color:#5c5c5c;transform:scaleX(0.8422);">40,02</div>
<div class="t" id="t50" style="left:640.00px;top:249.64px;font-size:5.5px;color:#9a9a9a;transform:scaleX(0.9663);">22-10-2021 - 20-11-2021</div>
<div class="t" id="t51" style="left:844.50px;top:111.52px;font-size:9.9px;color:#333;font-weight:700;transform:scaleX(0.8175);">Распределение клиентов ПЛ</div>
<div class="t" id="t52" style="left:807.75px;top:142.64px;font-size:7.04px;color:#555;">300k</div>
<div class="t" id="t53" style="left:807.75px;top:170.94px;font-size:7.04px;color:#555;">200k</div>
<div class="t" id="t54" style="left:807.75px;top:199.14px;font-size:7.04px;color:#555;">100k</div>
<div class="t" id="t55" style="left:819.08px;top:227.84px;font-size:7.04px;color:#555;">0</div>
<div class="t" id="t56" style="left:845.90px;top:149.48px;font-size:7.7px;color:#262626;text-shadow:0 0 1px #fff,0 0 1px #fff,0 0 1px #fff;transform:scaleX(0.8778);">245 301</div>
<div class="t" id="t57" style="left:846.90px;top:196.38px;font-size:7.7px;color:#262626;text-shadow:0 0 1px #fff,0 0 1px #fff,0 0 1px #fff;transform:scaleX(0.9526);">81 920</div>
<div class="t" id="t58" style="left:900.60px;top:189.98px;font-size:7.7px;color:#262626;text-shadow:0 0 1px #fff,0 0 1px #fff,0 0 1px #fff;transform:scaleX(0.9354);">104 927</div>
<div class="t" id="t59" style="left:902.00px;top:209.88px;font-size:7.7px;color:#262626;text-shadow:0 0 1px #fff,0 0 1px #fff,0 0 1px #fff;transform:scaleX(0.9355);">35 313</div>
<div class="t" id="t60" style="left:962.55px;top:219.68px;font-size:7.7px;color:#262626;text-shadow:0 0 1px #fff,0 0 1px #fff,0 0 1px #fff;transform:scaleX(0.9121);">360</div>
<div class="t" id="t61" style="left:843.95px;top:235.84px;font-size:7.04px;color:#555;transform:scaleX(0.8734);">Женщины</div>
<div class="t" id="t62" style="left:899.60px;top:235.84px;font-size:7.04px;color:#555;transform:scaleX(0.8929);">Мужчины</div>
<div class="t" id="t63" style="left:946.00px;top:235.84px;font-size:7.04px;color:#555;transform:scaleX(0.8894);">Не определено</div>
<div class="t" id="t64" style="left:859.00px;top:253.10px;font-size:8.03px;color:#333;font-weight:700;transform:scaleX(0.8132);">Общее кол-во клиентов ПЛ</div>
<div class="t" id="t65" style="left:859.00px;top:260.40px;font-size:8.03px;color:#333;font-weight:700;transform:scaleX(0.8018);">Кол-во активных клиентов ПЛ</div>
<div class="t" id="t66" style="left:959.20px;top:271.99px;font-size:6.16px;color:#aaa;transform:scaleX(0.8508);">Highcharts.com</div>
<div class="t" id="t67" style="left:140.70px;top:301.85px;font-size:8.8px;color:#6a35b0;font-weight:700;transform:scaleX(0.8426);">Динамика ПЛ</div>
<div class="t" id="t68" style="left:206.80px;top:301.85px;font-size:8.8px;color:#666;transform:scaleX(0.8350);">Кумулятивная кривая</div>
<div class="t" id="t69" style="left:297.80px;top:301.85px;font-size:8.8px;color:#666;transform:scaleX(0.8397);">Отток клиентов</div>
<div class="t" id="t70" style="left:368.10px;top:301.85px;font-size:8.8px;color:#666;transform:scaleX(0.8554);">Воронка продаж новых клиентов</div>
<div class="t" id="t71" style="left:146.40px;top:328.90px;font-size:8.03px;color:#555;transform:scaleX(0.9060);">Показатели</div>
<div class="t" id="t72" style="left:434.70px;top:328.80px;font-size:8.03px;color:#555;transform:scaleX(0.9028);">Интервал</div>
<div class="t" id="t73" style="left:153.70px;top:344.50px;font-size:8.03px;color:#777;transform:scaleX(0.9352);">Оборот ПЛ</div>
<div class="t" id="t74" style="left:209.70px;top:344.50px;font-size:8.03px;color:#777;transform:scaleX(0.9161);">Прибыль ПЛ</div>
<div class="t" id="t75" style="left:440.30px;top:344.30px;font-size:8.03px;color:#777;transform:scaleX(0.9596);">День / Месяц / Год</div>
<div class="t" id="t76" style="left:159.20px;top:365.80px;font-size:8.03px;color:#777;transform:scaleX(0.9217);">Показать подписи данных</div>
<div class="t" id="t77" style="left:151.05px;top:397.54px;font-size:7.04px;color:#555;">150k</div>
<div class="t" id="t78" style="left:151.05px;top:441.34px;font-size:7.04px;color:#555;">100k</div>
<div class="t" id="t79" style="left:154.96px;top:485.14px;font-size:7.04px;color:#555;">50k</div>
<div class="t" id="t80" style="left:174.70px;top:413.38px;font-size:7.7px;color:#262626;text-shadow:0 0 1px #fff,0 0 1px #fff,0 0 1px #fff;transform:scaleX(0.9251);">122 747,72</div>
<div class="t" id="t81" style="left:225.20px;top:426.28px;font-size:7.7px;color:#262626;text-shadow:0 0 1px #fff,0 0 1px #fff,0 0 1px #fff;transform:scaleX(0.9328);">108 033,88</div>
<div class="t" id="t82" style="left:281.90px;top:433.18px;font-size:7.7px;color:#262626;text-shadow:0 0 1px #fff,0 0 1px #fff,0 0 1px #fff;transform:scaleX(0.9268);">99 964,27</div>
<div class="t" id="t83" style="left:335.00px;top:429.78px;font-size:7.7px;color:#262626;text-shadow:0 0 1px #fff,0 0 1px #fff,0 0 1px #fff;transform:scaleX(0.9173);">103 793,23</div>
<div class="t" id="t84" style="left:362.00px;top:404.28px;font-size:7.7px;color:#262626;text-shadow:0 0 1px #fff,0 0 1px #fff,0 0 1px #fff;transform:scaleX(0.9354);">133 165,09</div>
<div class="t" id="t85" style="left:389.00px;top:415.53px;font-size:7.7px;color:#262626;text-shadow:0 0 1px #fff,0 0 1px #fff,0 0 1px #fff;transform:scaleX(0.9354);">137 072,72</div>
<div class="t" id="t86" style="left:446.25px;top:427.38px;font-size:7.7px;color:#262626;text-shadow:0 0 1px #fff,0 0 1px #fff,0 0 1px #fff;transform:scaleX(0.9312);">106 526,6</div>
<div class="t" id="t87" style="left:498.90px;top:408.18px;font-size:7.7px;color:#262626;text-shadow:0 0 1px #fff,0 0 1px #fff,0 0 1px #fff;transform:scaleX(0.9432);">127 876,84</div>
<div class="t" id="t88" style="left:554.40px;top:412.88px;font-size:7.7px;color:#262626;text-shadow:0 0 1px #fff,0 0 1px #fff,0 0 1px #fff;transform:scaleX(0.9173);">122 976,73</div>
<div class="t" id="t89" style="left:608.40px;top:424.58px;font-size:7.7px;color:#262626;text-shadow:0 0 1px #fff,0 0 1px #fff,0 0 1px #fff;transform:scaleX(0.9286);">110 022,71</div>
<div class="t" id="t90" style="left:663.40px;top:430.78px;font-size:7.7px;color:#262626;text-shadow:0 0 1px #fff,0 0 1px #fff,0 0 1px #fff;transform:scaleX(0.9251);">102 556,34</div>
<div class="t" id="t91" style="left:691.25px;top:418.48px;font-size:7.7px;color:#262626;text-shadow:0 0 1px #fff,0 0 1px #fff,0 0 1px #fff;transform:scaleX(0.9484);">117 339,95</div>
<div class="t" id="t92" style="left:747.80px;top:404.98px;font-size:7.7px;color:#262626;text-shadow:0 0 1px #fff,0 0 1px #fff,0 0 1px #fff;transform:scaleX(0.9239);">132 222,6</div>
<div class="t" id="t93" style="left:802.50px;top:417.58px;font-size:7.7px;color:#262626;text-shadow:0 0 1px #fff,0 0 1px #fff,0 0 1px #fff;transform:scaleX(0.9483);">118 002,9</div>
<div class="t" id="t94" style="left:855.50px;top:426.58px;font-size:7.7px;color:#262626;text-shadow:0 0 1px #fff,0 0 1px #fff,0 0 1px #fff;transform:scaleX(0.9225);">107 205,07</div>
<div class="t" id="t95" style="left:909.80px;top:427.08px;font-size:7.7px;color:#262626;text-shadow:0 0 1px #fff,0 0 1px #fff,0 0 1px #fff;transform:scaleX(0.9328);">106 802,38</div>
<div class="t" id="t96" style="left:937.60px;top:410.48px;font-size:7.7px;color:#262626;text-shadow:0 0 1px #fff,0 0 1px #fff,0 0 1px #fff;transform:scaleX(0.9199);">125 492,43</div>
<div class="t" id="t97" style="left:174.30px;top:497.53px;font-size:7.7px;color:#262626;text-shadow:0 0 1px #fff,0 0 1px #fff,0 0 1px #fff;transform:scaleX(0.9385);">25 946,13</div>
<div class="t" id="t98" style="left:226.60px;top:500.18px;font-size:7.7px;color:#262626;text-shadow:0 0 1px #fff,0 0 1px #fff,0 0 1px #fff;transform:scaleX(0.9356);">23 042,67</div>
<div class="t" id="t99" style="left:281.50px;top:501.88px;font-size:7.7px;color:#262626;text-shadow:0 0 1px #fff,0 0 1px #fff,0 0 1px #fff;transform:scaleX(0.9385);">21 445,35</div>
<div class="t" id="t100" style="left:335.70px;top:500.78px;font-size:7.7px;color:#262626;text-shadow:0 0 1px #fff,0 0 1px #fff,0 0 1px #fff;transform:scaleX(0.9648);">21 968,39</div>
<div class="t" id="t101" style="left:391.00px;top:494.98px;font-size:7.7px;color:#262626;text-shadow:0 0 1px #fff,0 0 1px #fff,0 0 1px #fff;transform:scaleX(0.9531);">29 440,89</div>
<div class="t" id="t102" style="left:446.00px;top:500.78px;font-size:7.7px;color:#262626;text-shadow:0 0 1px #fff,0 0 1px #fff,0 0 1px #fff;transform:scaleX(0.9531);">22 634,94</div>
<div class="t" id="t103" style="left:500.70px;top:496.48px;font-size:7.7px;color:#262626;text-shadow:0 0 1px #fff,0 0 1px #fff,0 0 1px #fff;transform:scaleX(0.9502);">27 146,59</div>
<div class="t" id="t104" style="left:554.80px;top:498.28px;font-size:7.7px;color:#262626;text-shadow:0 0 1px #fff,0 0 1px #fff,0 0 1px #fff;transform:scaleX(0.9414);">25 624,57</div>
<div class="t" id="t105" style="left:610.40px;top:500.48px;font-size:7.7px;color:#262626;text-shadow:0 0 1px #fff,0 0 1px #fff,0 0 1px #fff;transform:scaleX(0.9239);">22 971,66</div>
<div class="t" id="t106" style="left:665.00px;top:501.78px;font-size:7.7px;color:#262626;text-shadow:0 0 1px #fff,0 0 1px #fff,0 0 1px #fff;transform:scaleX(0.9356);">21 664,42</div>
<div class="t" id="t107" style="left:719.70px;top:499.38px;font-size:7.7px;color:#262626;text-shadow:0 0 1px #fff,0 0 1px #fff,0 0 1px #fff;transform:scaleX(0.9122);">24 214,65</div>
<div class="t" id="t108" style="left:774.30px;top:494.38px;font-size:7.7px;color:#262626;text-shadow:0 0 1px #fff,0 0 1px #fff,0 0 1px #fff;transform:scaleX(0.9210);">29 873,21</div>
<div class="t" id="t109" style="left:829.90px;top:500.18px;font-size:7.7px;color:#262626;text-shadow:0 0 1px #fff,0 0 1px #fff,0 0 1px #fff;transform:scaleX(0.9180);">23 060,73</div>
<div class="t" id="t110" style="left:884.50px;top:501.58px;font-size:7.7px;color:#262626;text-shadow:0 0 1px #fff,0 0 1px #fff,0 0 1px #fff;transform:scaleX(0.9483);">22 119,17</div>
<div class="t" id="t111" style="left:939.10px;top:497.48px;font-size:7.7px;color:#262626;text-shadow:0 0 1px #fff,0 0 1px #fff,0 0 1px #fff;transform:scaleX(0.9210);">25 945,91</div>
<div class="t" id="p0" style="left:323.70px;top:171.13px;color:#555;font-size:10px;transform:scaleX(0.9011);"><span style="font-size:10px">6</span><span style="font-size:9px">.59%</span></div>
<div class="t" id="p1" style="left:487.70px;top:171.13px;color:#555;font-size:10px;transform:scaleX(0.9011);"><span style="font-size:10px">9</span><span style="font-size:9px">.85%</span></div>
<div class="t" id="p2" style="left:651.70px;top:171.13px;color:#555;font-size:10px;transform:scaleX(0.8628);"><span style="font-size:10px">1</span><span style="font-size:9px">.08%</span></div>
<div class="t" id="p3" style="left:159.70px;top:266.14px;color:#555;font-size:10px;transform:scaleX(0.9011);"><span style="font-size:10px">0</span><span style="font-size:9px">.78%</span></div>
<div class="t" id="p4" style="left:323.70px;top:266.14px;color:#555;font-size:10px;transform:scaleX(0.9481);"><span style="font-size:10px">16</span><span style="font-size:9px">.36%</span></div>
<div class="t" id="p5" style="left:487.70px;top:266.14px;color:#555;font-size:10px;transform:scaleX(0.9011);"><span style="font-size:10px">9</span><span style="font-size:9px">.00%</span></div>
<div class="t" id="p6" style="left:651.70px;top:266.14px;color:#555;font-size:10px;transform:scaleX(0.9011);"><span style="font-size:10px">7</span><span style="font-size:9px">.49%</span></div>
</body></html>
